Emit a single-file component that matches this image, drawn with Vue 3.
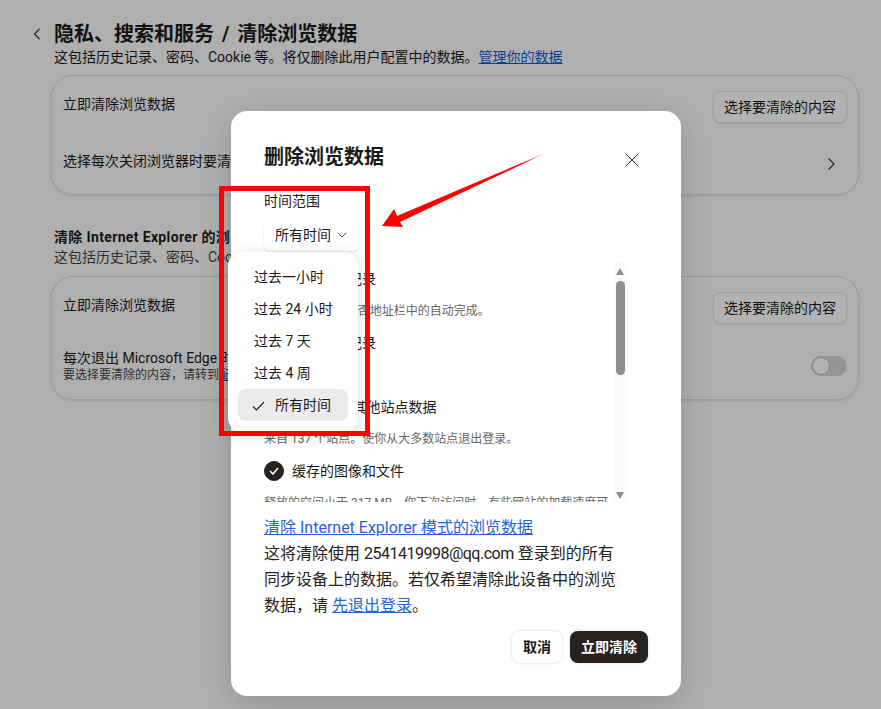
<script setup>
const timeRanges = [
  { label: '过去一小时' },
  { label: '过去 24 小时' },
  { label: '过去 7 天' },
  { label: '过去 4 周' },
  { label: '所有时间', selected: true },
]

const dataTypes = [
  { title: '浏览历史记录', desc: '5 个项目。包括是否地址栏中的自动完成。', checked: false },
  { title: '下载历史记录', desc: '无', checked: false },
  { title: 'Cookie 和其他站点数据', desc: '来自 137 个站点。使你从大多数站点退出登录。', checked: true },
  { title: '缓存的图像和文件', desc: '释放的空间小于 317 MB。你下次访问时，有些网站的加载速度可能会变慢。', checked: true },
]
</script>

<template>
  <div class="page">
    <header class="page-head">
      <svg class="back" width="8" height="12" viewBox="0 0 8 12">
        <path d="M6.5 1 1.5 6l5 5" fill="none" stroke="#333" stroke-width="1.1" />
      </svg>
      <div>
        <h1>隐私、搜索和服务 / 清除浏览数据</h1>
        <p class="muted">这包括历史记录、密码、Cookie 等。将仅删除此用户配置中的数据。<a class="link">管理你的数据</a></p>
      </div>
    </header>

    <section class="card first">
      <div class="row">
        <span class="row-text">立即清除浏览数据</span>
        <button class="ghost-btn" type="button">选择要清除的内容</button>
      </div>
      <div class="row row-close">
        <span>选择每次关闭浏览器时要清除的内容</span>
        <svg width="9" height="14" viewBox="0 0 9 14">
          <path d="M1.5 1.5 7 7l-5.500 5.500" fill="none" stroke="#333" stroke-width="1.2" />
        </svg>
      </div>
    </section>

    <h2>清除 Internet Explorer 的浏览数据</h2>
    <p class="muted sub">这包括历史记录、密码、Cookie 等。</p>

    <section class="card second">
      <div class="row">
        <span class="row-text">立即清除浏览数据</span>
        <button class="ghost-btn" type="button">选择要清除的内容</button>
      </div>
      <div class="row row-exit">
        <div>
          <div class="exit-title">每次退出 Microsoft Edge 时清除</div>
          <div class="exit-desc">要选择要清除的内容，请转到<a class="link">配置文件</a></div>
        </div>
        <span class="toggle"><i></i></span>
      </div>
    </section>

    <div class="scrim"></div>

    <div class="dialog">
      <div class="dialog-head">
        <h3>删除浏览数据</h3>
        <svg class="close" width="14" height="14" viewBox="0 0 14 14">
          <path d="M1 1l12 12M13 1 1 13" stroke="#222" stroke-width="1" fill="none" />
        </svg>
      </div>

      <div class="field-label">时间范围</div>
      <div class="select">
        <span>所有时间</span>
        <svg width="10" height="6" viewBox="0 0 10 6">
          <path d="M.7.7 5 5 9.300.7" fill="none" stroke="#555" stroke-width="1" />
        </svg>
      </div>

      <div class="scroller">
        <div class="types">
          <div v-for="item in dataTypes" :key="item.title" class="type">
            <div class="type-title">
              <span class="check" :class="{ on: item.checked }">
                <svg v-if="item.checked" width="10" height="8" viewBox="0 0 10 8">
                  <path d="M1 4l3 3 5-6" fill="none" stroke="#fff" stroke-width="1.500" />
                </svg>
              </span>
              {{ item.title }}
            </div>
            <div class="type-desc">{{ item.desc }}</div>
          </div>
        </div>
        <div class="scrollbar">
          <span class="arrow up"></span>
          <span class="thumb"></span>
          <span class="arrow down"></span>
        </div>
      </div>

      <div class="note">
        <a class="link bright">清除 Internet Explorer 模式的浏览数据</a><br>
        这将清除使用 <span class="email">2541419998@qq.com</span> 登录到的所有同步设备上的数据。若仅希望清除此设备中的浏览数据，请 <a class="link bright">先退出登录</a>。
      </div>

      <div class="actions">
        <button class="btn" type="button">取消</button>
        <button class="btn primary" type="button">立即清除</button>
      </div>

      <ul class="menu">
        <li v-for="range in timeRanges" :key="range.label" :class="{ selected: range.selected }">
          <svg v-if="range.selected" class="tick" width="13" height="10" viewBox="0 0 13 10">
            <path d="M1 5.500 4.500 9 12 1" fill="none" stroke="#222" stroke-width="1.200" />
          </svg>
          {{ range.label }}
        </li>
      </ul>
    </div>

    <!-- red annotation drawn on top of the screenshot -->
    <div class="mark-box"></div>
    <svg class="mark-arrow" width="881" height="709" viewBox="0 0 881 709">
      <defs>
        <linearGradient id="fade" x1="550" y1="151" x2="522" y2="164" gradientUnits="userSpaceOnUse">
          <stop offset="0" stop-color="#ff0000" stop-opacity="0" />
          <stop offset="1" stop-color="#ff0000" />
        </linearGradient>
      </defs>
      <polygon points="382,226 394,209 397,216 550,151 400,222 403,227" fill="url(#fade)" />
    </svg>
  </div>
</template>

<style scoped>
.page {
  position: relative;
  width: 881px;
  height: 709px;
  overflow: hidden;
  box-sizing: border-box;
  padding: 21px 22px 0 51px;
  background: #fbfbfb;
  color: #1a1a1a;
  font-family: Roboto, "Noto Sans CJK SC", sans-serif;
  font-size: 14px;
  line-height: 20px;
}

.page-head {
  position: relative;
  padding-left: 3px;
}

.back {
  position: absolute;
  left: -18px;
  top: 7px;
}

h1 {
  margin: 0;
  font-size: 20px;
  line-height: 24px;
  font-weight: 700;
  word-spacing: 3px;
  position: relative;
  top: 1px;
}

h2 {
  margin: 32px 0 0 3px;
  font-size: 14px;
  line-height: 20px;
  font-weight: 700;
  letter-spacing: 0.35px;
  white-space: nowrap;
}

.muted {
  margin: 2px 0 0;
  line-height: 20px;
  white-space: nowrap;
}

.muted.sub {
  margin: 0 0 0 3px;
  color: #444;
}

.link {
  color: #0f5ad8;
  text-decoration: underline;
}

.link.bright {
  color: #2563d8;
}

.card {
  box-sizing: border-box;
  width: 808px;
  border: 1px solid #dedede;
  border-radius: 22px;
  box-shadow: 0 1px 3px rgba(0, 0, 0, 0.12);
}

.card.first {
  height: 120px;
  margin-top: 8px;
}

.card.second {
  height: 124px;
  margin-top: 9px;
}

.row {
  display: flex;
  justify-content: space-between;
  align-items: flex-start;
  padding: 15px 11px 0;
}

.row-text {
  margin-top: 3px;
}

.row-close {
  align-items: center;
  padding: 33px 22px 0 11px;
}

.row-close span {
  margin-top: -5px;
}

.row-exit {
  align-items: center;
  padding-top: 25px;
}

.exit-title {
  line-height: 18px;
}

.exit-desc {
  font-size: 12px;
  line-height: 16px;
  color: #444;
}

.ghost-btn {
  box-sizing: border-box;
  width: 134px;
  height: 32px;
  padding: 0;
  border: 1px solid #e4e4e4;
  border-radius: 8px;
  background: #ffffff;
  box-shadow: 0 1px 2px rgba(0, 0, 0, 0.1);
  color: #1a1a1a;
  font: inherit;
}

.toggle {
  position: relative;
  width: 36px;
  height: 20px;
  border-radius: 10px;
  background: #d6d6d6;
}

.toggle i {
  position: absolute;
  left: 1px;
  top: 1px;
  width: 16px;
  height: 16px;
  border: 1px solid #bbb;
  border-radius: 50%;
  background: #fff;
}

.scrim {
  position: absolute;
  inset: 0;
  background: rgba(0, 0, 0, 0.3);
}

.dialog {
  position: absolute;
  left: 231px;
  top: 111px;
  box-sizing: border-box;
  width: 450px;
  height: 585px;
  padding: 33px 33px 0;
  border-radius: 16px;
  background: #fff;
  box-shadow: 0 8px 32px rgba(0, 0, 0, 0.16);
}

.dialog-head {
  display: flex;
  justify-content: space-between;
  align-items: center;
}

.dialog-head h3 {
  margin: 1px 0 -1px;
  font-size: 20px;
  line-height: 24px;
  font-weight: 700;
}

.close {
  margin: 8px 9px 0 0;
}

.field-label {
  margin-top: 23px;
  line-height: 20px;
}

.select {
  display: flex;
  align-items: center;
  gap: 6px;
  box-sizing: border-box;
  width: 95px;
  height: 32px;
  margin-top: 8px;
  padding-left: 11px;
  border-radius: 6px;
  box-shadow: 0 1px 2px rgba(0, 0, 0, 0.14);
}

.scroller {
  display: flex;
  justify-content: space-between;
  width: 364px;
  height: 240px;
  margin-top: 11px;
  overflow: hidden;
}

.types {
  width: 346px;
  padding-top: 1px;
}

.type {
  height: 64px;
}

.type-title {
  display: flex;
  align-items: center;
  gap: 8px;
  height: 32px;
  line-height: 32px;
}

.check {
  display: flex;
  align-items: center;
  justify-content: center;
  box-sizing: border-box;
  width: 20px;
  height: 20px;
  border-radius: 50%;
  border: 1px solid #888;
}

.check.on {
  border-color: #262220;
  background: #262220;
}

.type-desc {
  height: 32px;
  font-size: 12px;
  line-height: 32px;
  color: #666;
}

.scrollbar {
  position: relative;
  width: 15px;
  background: #fafafa;
}

.thumb {
  position: absolute;
  left: 3px;
  top: 19px;
  width: 9px;
  height: 94px;
  border-radius: 5px;
  background: #8f8f8f;
}

.arrow {
  position: absolute;
  left: 3px;
  width: 0;
  height: 0;
  border-left: 4.500px solid transparent;
  border-right: 4.500px solid transparent;
}

.arrow.up {
  top: 6px;
  border-bottom: 7px solid #8f8f8f;
}

.arrow.down {
  bottom: 3px;
  border-top: 7px solid #8f8f8f;
}

.note {
  width: 356px;
  margin-top: 13px;
  font-size: 16px;
  line-height: 26px;
  color: #262220;
}

.email {
  letter-spacing: -0.5px;
}

.actions {
  display: flex;
  justify-content: flex-end;
  gap: 8px;
  margin-top: 12px;
}

.btn {
  height: 32px;
  width: 50px;
  padding: 0;
  border: none;
  border-radius: 8px;
  background: #fff;
  box-shadow: 0 0 3px rgba(0, 0, 0, 0.18);
  color: #1a1a1a;
  font: inherit;
  font-weight: 600;
}

.btn.primary {
  width: 78px;
  background: #262220;
  color: #fff;
}

.menu {
  position: absolute;
  left: -3px;
  top: 141px;
  box-sizing: border-box;
  width: 130px;
  height: 180px;
  margin: 0;
  padding: 9px 10px;
  list-style: none;
  border-radius: 14px;
  background: #fff;
  box-shadow: 0 4px 16px rgba(0, 0, 0, 0.14);
}

.menu li {
  position: relative;
  height: 32px;
  padding-left: 16px;
  line-height: 32px;
  border-radius: 8px;
}

.menu li.selected {
  padding-left: 37px;
  background: #ebebeb;
}

.tick {
  position: absolute;
  left: 14px;
  top: 12px;
}

.mark-box {
  position: absolute;
  left: 219px;
  top: 186px;
  box-sizing: border-box;
  width: 151px;
  height: 250px;
  border: 5px solid #ff0000;
}

.mark-arrow {
  position: absolute;
  left: 0;
  top: 0;
}
</style>
